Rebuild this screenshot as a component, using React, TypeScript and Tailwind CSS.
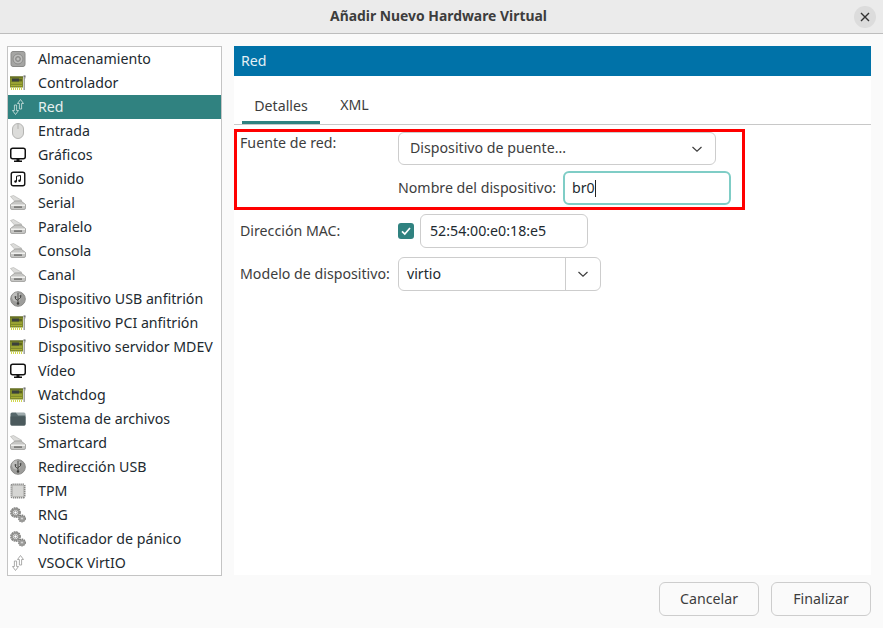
import React from 'react';

type IconKind = 'disk' | 'card' | 'net' | 'mouse' | 'monitor' | 'sound' | 'serial' | 'usb' | 'folder' | 'chip' | 'gears';

const ITEMS: { label: string; icon: IconKind }[] = [
  { label: 'Almacenamiento', icon: 'disk' },
  { label: 'Controlador', icon: 'card' },
  { label: 'Red', icon: 'net' },
  { label: 'Entrada', icon: 'mouse' },
  { label: 'Gráficos', icon: 'monitor' },
  { label: 'Sonido', icon: 'sound' },
  { label: 'Serial', icon: 'serial' },
  { label: 'Paralelo', icon: 'serial' },
  { label: 'Consola', icon: 'serial' },
  { label: 'Canal', icon: 'serial' },
  { label: 'Dispositivo USB anfitrión', icon: 'usb' },
  { label: 'Dispositivo PCI anfitrión', icon: 'card' },
  { label: 'Dispositivo servidor MDEV', icon: 'card' },
  { label: 'Vídeo', icon: 'monitor' },
  { label: 'Watchdog', icon: 'card' },
  { label: 'Sistema de archivos', icon: 'folder' },
  { label: 'Smartcard', icon: 'serial' },
  { label: 'Redirección USB', icon: 'usb' },
  { label: 'TPM', icon: 'chip' },
  { label: 'RNG', icon: 'gears' },
  { label: 'Notificador de pánico', icon: 'gears' },
  { label: 'VSOCK VirtIO', icon: 'net' },
];

// small hardware icons, all drawn on a 16x16 box
const HwIcon = ({ kind, selected }: { kind: IconKind; selected?: boolean }) => {
  const box = { width: 16, height: 16, viewBox: '0 0 16 16', fill: 'none' };
  switch (kind) {
    case 'disk':
      return (
        <svg {...box}>
          <rect x="1" y="0.5" width="14" height="15" rx="2" fill="#a5a5a3" stroke="#8a8a88" />
          <circle cx="8" cy="8" r="5" fill="#bcbcba" stroke="#8c8c8a" />
          <circle cx="8" cy="8" r="2.4" fill="#a8a8a6" stroke="#858583" />
          <circle cx="8" cy="8" r="0.8" fill="#dcdcda" />
        </svg>
      );
    case 'card':
      return (
        <svg {...box}>
          <rect x="0" y="1.5" width="13" height="11" fill="#7f8a2a" />
          <rect x="0" y="1.5" width="13" height="1" fill="#565f1e" />
          <rect x="2" y="3.5" width="7" height="3" fill="#3b403c" />
          <rect x="9" y="4" width="3" height="2" fill="#5d6420" />
          <path d="M1 8h11" stroke="#b4ba3a" />
          <path d="M1 10.5h11" stroke="#a7ad36" />
          <path d="M1.5 12.5v2.5M3.5 12.5v2.5M5.5 12.5v2.5M7.5 12.5v2.5M9.5 12.5v2.5M11.5 12.5v2.5" stroke="#d2d84c" />
          <path d="M13.5 1h2v2l-.6 1v11h-1.4z" fill="#9a9c98" />
          <rect x="13.5" y="0.5" width="2" height="1" fill="#56585a" />
        </svg>
      );
    case 'net': {
      const c = selected ? '#c4dbd8' : '#a2a2a0';
      return (
        <svg {...box}>
          <path d="M10.5 0.5 L13.5 4.5 H11.6 V10 H9.4 V4.5 H7.5 Z" stroke={c} strokeWidth="0.9" strokeLinejoin="round" />
          <path d="M5.5 15.5 L2.5 11.5 H4.4 V6 H6.6 V11.5 H8.5 Z" stroke={c} strokeWidth="0.9" strokeLinejoin="round" />
        </svg>
      );
    }
    case 'mouse':
      return (
        <svg {...box}>
          <rect x="2.5" y="0.5" width="11" height="15" rx="5.5" fill="#dcdcda" stroke="#b4b4b2" />
          <path d="M8 1v5" stroke="#b4b4b2" />
          <rect x="7" y="2.5" width="2" height="3" rx="1" fill="#c6c6c4" />
        </svg>
      );
    case 'monitor':
      return (
        <svg {...box}>
          <rect x="0.75" y="1.25" width="14.5" height="10.5" rx="2" fill="#fff" stroke="#111" strokeWidth="1.5" />
          <rect x="6.5" y="12" width="3" height="2" fill="#111" />
          <rect x="4" y="13.5" width="8" height="1.5" fill="#111" />
        </svg>
      );
    case 'sound':
      return (
        <svg {...box}>
          <rect x="1.25" y="1.25" width="13.5" height="13.5" rx="2" fill="#fff" stroke="#111" strokeWidth="1.4" />
          <path d="M6.5 10.5V5.2l4-.7v5" stroke="#111" />
          <circle cx="5.5" cy="10.5" r="1.2" fill="#111" />
          <circle cx="9.5" cy="9.7" r="1.2" fill="#111" />
        </svg>
      );
    case 'serial':
      return (
        <svg {...box}>
          <path d="M0.5 1.5 L3.5 0.5 L12 5.5 L5 6.5 Z" fill="#dcdcda" stroke="#b8b8b6" strokeWidth="0.7" />
          <path d="M5 6 H11 L15.5 9.5 V13 Q15.5 14.5 14 14.5 H2 Q0.5 14.5 0.5 13 V9.5 Z" fill="#c6c6c4" stroke="#9a9a98" strokeWidth="0.8" />
          <rect x="1" y="9.5" width="14" height="1.5" fill="#f0f0ee" />
          <rect x="4" y="11.2" width="8" height="1.8" fill="#7e7e7c" />
        </svg>
      );
    case 'usb':
      return (
        <svg {...box}>
          <circle cx="8" cy="8" r="7.3" fill="#9d9d9b" stroke="#8a8a88" />
          <circle cx="6.5" cy="6" r="4.5" fill="#bdbdbb" />
          <path d="M8 2v10M8 9.5 5.5 8V6.5M8 8.5 10.5 7V5.5" stroke="#3f3f3d" strokeWidth="0.9" />
          <circle cx="8" cy="12.5" r="1.2" fill="#3f3f3d" />
          <rect x="4.7" y="5.2" width="1.6" height="1.6" fill="#3f3f3d" />
          <rect x="9.7" y="4.2" width="1.6" height="1.6" fill="#3f3f3d" />
        </svg>
      );
    case 'folder':
      return (
        <svg {...box}>
          <path d="M0.5 3 Q0.5 1.5 2 1.5 H6 L7.5 3 H14 Q15.5 3 15.5 4.5 V13 Q15.5 14.5 14 14.5 H2 Q0.5 14.5 0.5 13 Z" fill="#57686b" />
          <path d="M0.5 5.5 H15.5 V13 Q15.5 14.5 14 14.5 H2 Q0.5 14.5 0.5 13 Z" fill="#4b5a5d" />
          <path d="M6 1.5 H14 Q15.5 1.5 15.5 3 V4.5 H8 Z" fill="#9eaaac" />
        </svg>
      );
    case 'chip':
      return (
        <svg {...box}>
          <rect x="1.5" y="1.5" width="13" height="13" rx="1" stroke="#858583" strokeWidth="2" strokeDasharray="1.3 0.7" />
          <rect x="2.3" y="2.3" width="11.4" height="11.4" rx="1" fill="#d6d6d4" stroke="#a6a6a4" strokeWidth="0.7" />
        </svg>
      );
    case 'gears':
      return (
        <svg {...box}>
          <circle cx="5.5" cy="5.5" r="4" stroke="#747472" strokeWidth="2.6" strokeDasharray="1.6 0.5" />
          <circle cx="5.5" cy="5.5" r="3.5" stroke="#969694" strokeWidth="1.8" />
          <circle cx="5.5" cy="5.5" r="1.7" fill="#fff" stroke="#666664" strokeWidth="0.7" />
          <circle cx="12" cy="11.5" r="2.8" stroke="#747472" strokeWidth="2.2" strokeDasharray="1.3 0.5" />
          <circle cx="12" cy="11.5" r="2.4" stroke="#969694" strokeWidth="1.4" />
          <circle cx="12" cy="11.5" r="1.1" fill="#fff" stroke="#666664" strokeWidth="0.6" />
        </svg>
      );
  }
};

const Chevron = () => (
  <svg width="12" height="12" viewBox="0 0 12 12" fill="none">
    <path d="M1.5 4 L6 8.2 L10.5 4" stroke="#3d3d3d" strokeWidth="1.2" />
  </svg>
);

export default function App() {
  return (
    <div
      className="w-[883px] h-[628px] flex flex-col bg-[#fafafa] text-[14.2px] text-[#3d3d3d] overflow-hidden"
      style={{ fontFamily: '"Noto Sans", "Open Sans", sans-serif' }}
    >
      {/* title bar */}
      <div className="h-[34px] shrink-0 flex items-center border-b border-[#bdbdbd] bg-[#ebebeb] pl-[23px] pr-[7px]">
        <div className="flex-1 text-center font-bold text-[13.9px] text-[#3d3d3d]">Añadir Nuevo Hardware Virtual</div>
        <div className="w-[22px] h-[22px] rounded-full bg-[#dcdcdc] flex items-center justify-center">
          <svg width="10" height="10" viewBox="0 0 10 10" fill="none">
            <path d="M1 1 L9 9 M9 1 L1 9" stroke="#333" strokeWidth="1.4" />
          </svg>
        </div>
      </div>

      <div className="flex-1 flex pt-[12px] pl-[7px] pr-[12px] gap-[12px] min-h-0">
        {/* hardware list */}
        <div className="w-[215px] h-[530px] border border-[#c4c4c4] bg-white shrink-0">
          {ITEMS.map((item) => {
            const selected = item.label === 'Red';
            return (
              <div
                key={item.label}
                className={
                  selected
                    ? 'h-[24px] flex items-center pl-[2px] bg-[#308280] text-[#e6f0ef]'
                    : 'h-[24px] flex items-center pl-[2px] text-[#222a30]'
                }
              >
                <div className="w-[16px] h-[16px] shrink-0 mr-[12px]">
                  <HwIcon kind={item.icon} selected={selected} />
                </div>
                <span className="whitespace-nowrap">{item.label}</span>
              </div>
            );
          })}
        </div>

        {/* details panel */}
        <div className="w-[637px] h-[529px] bg-white flex flex-col">
          <div className="h-[30px] bg-[#0072a8] text-[#e4eff5] flex items-center pl-[7px]">Red</div>

          <div className="h-[49px] flex items-end border-b border-[#c8c8c8] pl-[8px]">
            <div className="w-[78px] h-[48px] flex items-center justify-center border-b-[3px] border-[#308280] pt-[15px]">Detalles</div>
            <div className="w-[69px] h-[48px] flex items-center justify-center pt-[10px]">XML</div>
          </div>

          <div className="pt-[4px]">
            {/* network source, with the red note frame */}
            <div className="w-[511px] h-[81px] border-[3px] border-[#ff0000] flex">
              <div className="w-[161px] pl-[3px]">Fuente de red:</div>
              <div className="flex flex-col">
                <div className="w-[318px] h-[33px] rounded-[6px] border border-[#cdcdcd] flex items-center justify-between pl-[11px] pr-[12px]">
                  <span className="pb-[2px]">Dispositivo de puente...</span>
                  <Chevron />
                </div>
                <div className="flex items-center mt-[6px]">
                  <span className="w-[165px] whitespace-nowrap">Nombre del dispositivo:</span>
                  <div className="w-[168px] h-[34px] rounded-[6px] border-2 border-[#7fcdc6] flex items-center pl-[7px] text-[#222a30]">
                    br0<span className="w-px h-[17px] bg-[#222]" />
                  </div>
                </div>
              </div>
            </div>

            <div className="flex items-center h-[34px] mt-[4px] pl-[6px]">
              <span className="w-[158px]">Dirección MAC:</span>
              <div className="w-[16px] h-[16px] rounded-[3px] bg-[#308280] flex items-center justify-center mr-[6px]">
                <svg width="12" height="12" viewBox="0 0 12 12" fill="none">
                  <path d="M2 6.3 L4.8 9 L10 3" stroke="#fff" strokeWidth="1.7" />
                </svg>
              </div>
              <div className="w-[168px] h-[34px] rounded-[6px] border border-[#cdcdcd] flex items-center pl-[9px] text-[#222a30]">52:54:00:e0:18:e5</div>
            </div>

            <div className="flex items-center h-[34px] mt-[9px] pl-[6px]">
              <span className="w-[158px] whitespace-nowrap">Modelo de dispositivo:</span>
              <div className="w-[203px] h-[34px] rounded-[6px] border border-[#cdcdcd] flex items-center text-[#222a30]">
                <span className="w-[166px] pl-[8px]">virtio</span>
                <span className="h-full border-l border-[#cdcdcd] flex-1 flex items-center justify-center">
                  <Chevron />
                </span>
              </div>
            </div>
          </div>
        </div>
      </div>

      {/* action buttons */}
      <div className="h-[46px] shrink-0 flex items-start justify-end gap-[12px] pr-[12px]">
        <div className="w-[100px] h-[34px] rounded-[6px] border border-[#cdcdcd] bg-[#fafafa] flex items-center justify-center">Cancelar</div>
        <div className="w-[100px] h-[34px] rounded-[6px] border border-[#cdcdcd] bg-[#fafafa] flex items-center justify-center">Finalizar</div>
      </div>
    </div>
  );
}
